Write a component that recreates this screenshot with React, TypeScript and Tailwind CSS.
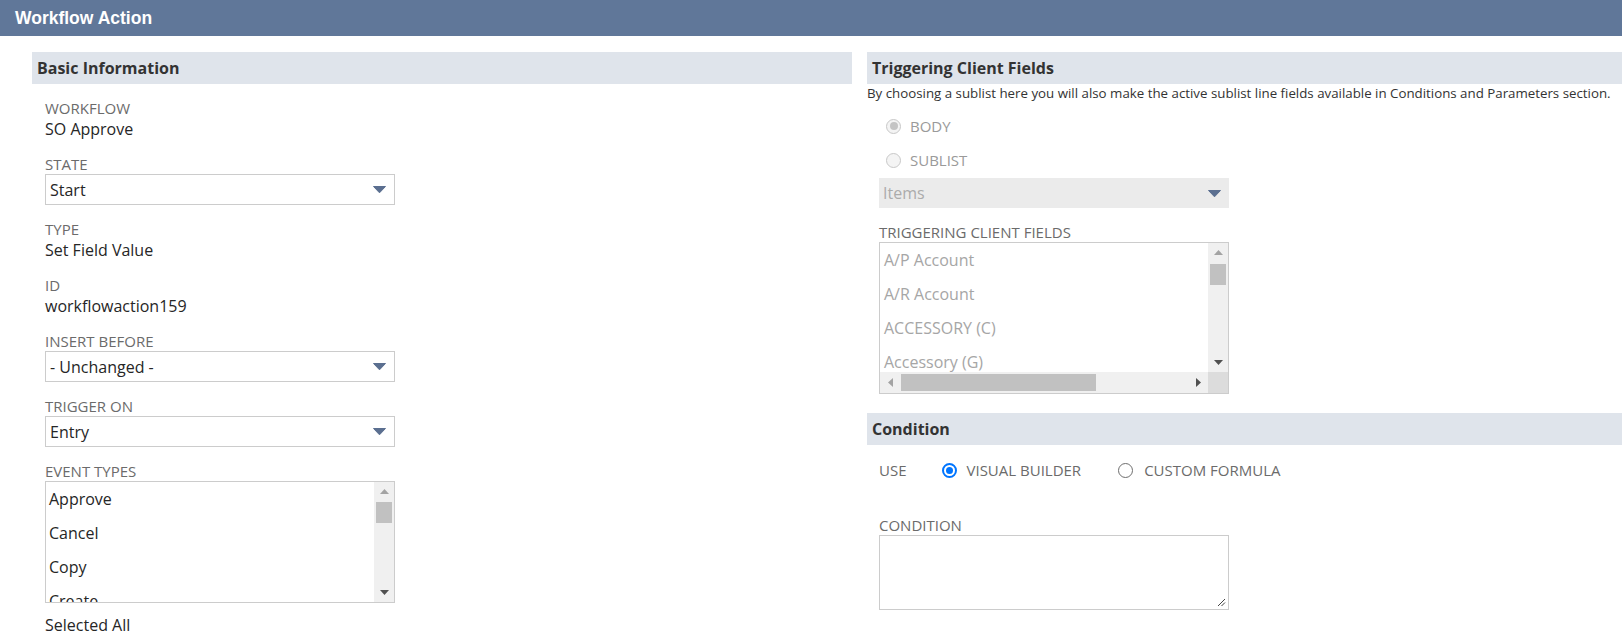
const SelectArrow = () => (
  <svg width="13" height="7" viewBox="0 0 13 7">
    <path d="M0.5 0.5H12.5L6.5 6.8Z" fill="#5b6f90" stroke="#5b6f90" strokeLinejoin="round" />
  </svg>
);

const Tri = ({ dir, color }: { dir: "up" | "down" | "left" | "right"; color: string }) => {
  const d = {
    up: "M0 5L4.5 0L9 5Z",
    down: "M0 0H9L4.5 5Z",
    left: "M5 0V9L0 4.5Z",
    right: "M0 0V9L5 4.5Z",
  }[dir];
  const horiz = dir === "left" || dir === "right";
  return (
    <svg width={horiz ? 5 : 9} height={horiz ? 9 : 5} viewBox={horiz ? "0 0 5 9" : "0 0 9 5"}>
      <path d={d} fill={color} />
    </svg>
  );
};

const Label = ({ children }: { children: React.ReactNode }) => (
  <div className="text-[15px] leading-[20px] text-[#6b6b6b]">{children}</div>
);

const Value = ({ children }: { children: React.ReactNode }) => (
  <div className="text-[16px] leading-[22px] text-[#262626]">{children}</div>
);

const Select = ({ value, disabled }: { value: string; disabled?: boolean }) =>
  disabled ? (
    <div className="flex h-[30px] w-[350px] items-center justify-between bg-[#ebebeb] pl-[4px] pr-[8px] text-[16px] text-[#ababab]">
      <span>{value}</span>
      <SelectArrow />
    </div>
  ) : (
    <div className="flex h-[31px] w-[350px] items-center justify-between border border-[#cccccc] bg-white pl-[4px] pr-[8px] text-[16px] text-[#262626]">
      <span>{value}</span>
      <SelectArrow />
    </div>
  );

const VScroll = ({ thumbTop }: { thumbTop: number }) => (
  <div className="flex w-[20px] flex-col bg-[#f0f0f0]">
    <div className="flex h-[18px] items-center justify-center">
      <Tri dir="up" color="#a3a3a3" />
    </div>
    <div className={`mx-[2px] h-[21px] bg-[#c1c1c1] ${thumbTop === 3 ? "mt-[3px]" : "mt-[2px]"}`} />
    <div className="flex-1" />
    <div className="flex h-[20px] items-center justify-center">
      <Tri dir="down" color="#505050" />
    </div>
  </div>
);

const Radio = ({ checked, disabled }: { checked?: boolean; disabled?: boolean }) => {
  if (disabled) {
    return (
      <div className="flex h-[15px] w-[15px] items-center justify-center rounded-full border border-[#c8c8c8] bg-[#f4f4f4]">
        {checked && <div className="h-[8px] w-[8px] rounded-full bg-[#c4c4c4]" />}
      </div>
    );
  }
  if (checked) {
    return (
      <div className="flex h-[15px] w-[15px] items-center justify-center rounded-full border-[2px] border-[#0075ff] bg-white">
        <div className="h-[7px] w-[7px] rounded-full bg-[#0075ff]" />
      </div>
    );
  }
  return <div className="h-[15px] w-[15px] rounded-full border border-[#6e6e6e] bg-white" />;
};

const SectionBar = ({ title }: { title: string }) => (
  <div className="flex h-[32px] items-center bg-[#dfe4eb] pl-[5px] text-[16px] font-bold text-[#333333]">
    {title}
  </div>
);

const App = () => {
  const events = ["Approve", "Cancel", "Copy", "Create"];
  const fields = ["A/P Account", "A/R Account", "ACCESSORY (C)", "Accessory (G)"];

  return (
    <div className="min-h-[638px] w-[1622px] overflow-hidden bg-white font-['Open_Sans',sans-serif]">
      <div className="flex h-[36px] items-center bg-[#607799] pl-[15px] font-['Liberation_Sans',Arial,sans-serif] text-[17.5px] font-bold text-white">
        Workflow Action
      </div>

      <div className="mt-[16px] flex gap-[15px] pl-[32px]">
        {/* left column */}
        <div className="w-[820px] shrink-0">
          <SectionBar title="Basic Information" />
          <div className="flex flex-col gap-[14px] pl-[13px] pt-[14px]">
            <div>
              <Label>WORKFLOW</Label>
              <Value>SO Approve</Value>
            </div>
            <div>
              <Label>STATE</Label>
              <Select value="Start" />
            </div>
            <div>
              <Label>TYPE</Label>
              <Value>Set Field Value</Value>
            </div>
            <div>
              <Label>ID</Label>
              <Value>workflowaction159</Value>
            </div>
            <div>
              <Label>INSERT BEFORE</Label>
              <Select value="- Unchanged -" />
            </div>
            <div>
              <Label>TRIGGER ON</Label>
              <Select value="Entry" />
            </div>
            <div>
              <Label>EVENT TYPES</Label>
              <div className="flex h-[122px] w-[350px] border border-[#cccccc] bg-white">
                <div className="flex-1 overflow-hidden">
                  {events.map((e) => (
                    <div key={e} className="flex h-[34px] shrink-0 items-center pl-[3px] text-[16px] text-[#262626]">
                      {e}
                    </div>
                  ))}
                </div>
                <VScroll thumbTop={2} />
              </div>
              <div className="mt-[11px] text-[16px] leading-[22px] text-[#262626]">Selected All</div>
            </div>
          </div>
        </div>

        {/* right column */}
        <div className="min-w-0 flex-1">
          <SectionBar title="Triggering Client Fields" />
          <div className="whitespace-nowrap text-[13.3px] leading-[18px] text-[#333333]">
            By choosing a sublist here you will also make the active sublist line fields available in Conditions and Parameters section.
          </div>

          <div className="pl-[12px]">
            <div className="mt-[14px] flex flex-col gap-[14px] pl-[7px]">
              <div className="flex h-[20px] items-center gap-[9px] text-[15px] text-[#9a9a9a]">
                <Radio checked disabled />
                <span>BODY</span>
              </div>
              <div className="flex h-[20px] items-center gap-[9px] text-[15px] text-[#9a9a9a]">
                <Radio disabled />
                <span>SUBLIST</span>
              </div>
            </div>
            <div className="mt-[8px]">
              <Select value="Items" disabled />
            </div>

            <div className="mt-[14px]">
              <Label>TRIGGERING CLIENT FIELDS</Label>
              <div className="flex h-[152px] w-[350px] flex-col border border-[#cccccc] bg-white">
                <div className="flex min-h-0 flex-1">
                  <div className="flex-1 overflow-hidden">
                    {fields.map((f) => (
                      <div key={f} className="flex h-[34px] items-center pl-[4px] text-[16px] text-[#a6a6a6]">
                        {f}
                      </div>
                    ))}
                  </div>
                  <VScroll thumbTop={3} />
                </div>
                <div className="flex h-[21px]">
                  <div className="flex flex-1 items-center bg-[#f0f0f0]">
                    <div className="flex w-[21px] justify-center">
                      <Tri dir="left" color="#a3a3a3" />
                    </div>
                    <div className="h-[17px] w-[195px] bg-[#c1c1c1]" />
                    <div className="flex-1" />
                    <div className="flex w-[20px] justify-center">
                      <Tri dir="right" color="#505050" />
                    </div>
                  </div>
                  <div className="w-[20px] bg-[#dcdcdc]" />
                </div>
              </div>
            </div>
          </div>

          <div className="mt-[19px]">
            <SectionBar title="Condition" />
          </div>
          <div className="pl-[12px]">
            <div className="mt-[15px] flex h-[20px] items-center text-[15px] text-[#6b6b6b]">
              <span>USE</span>
              <div className="ml-[35px] flex items-center gap-[10px]">
                <Radio checked />
                <span>VISUAL BUILDER</span>
              </div>
              <div className="ml-[37px] flex items-center gap-[11px]">
                <Radio />
                <span>CUSTOM FORMULA</span>
              </div>
            </div>

            <div className="mt-[35px]">
              <Label>CONDITION</Label>
              <div className="flex h-[75px] w-[350px] items-end justify-end border border-[#cccccc] bg-white p-[2px]">
                <svg width="9" height="9" viewBox="0 0 9 9">
                  <path d="M1 8L8 1M4.5 8L8 4.5" stroke="#444" strokeWidth="1" />
                </svg>
              </div>
            </div>
          </div>
        </div>
      </div>
    </div>
  );
};

export default App;
